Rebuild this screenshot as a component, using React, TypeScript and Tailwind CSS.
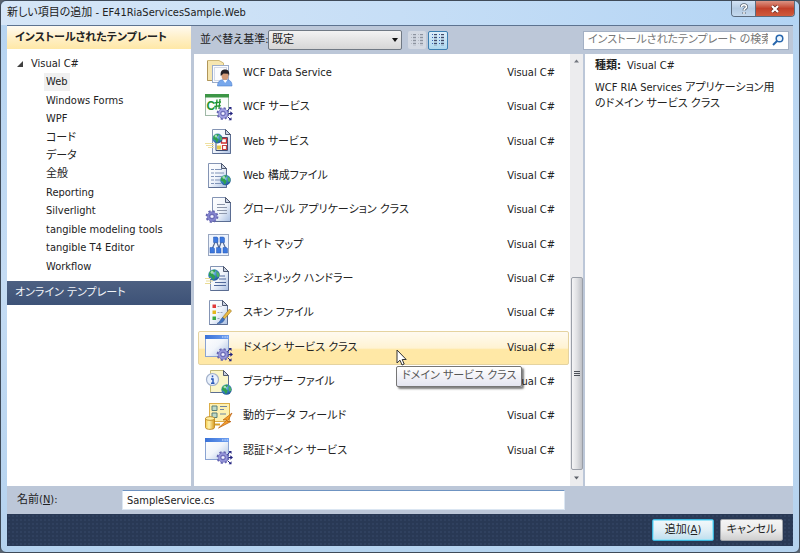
import { useState } from 'react'
import type { ReactNode } from 'react'

const categories = [
  'Web',
  'Windows Forms',
  'WPF',
  'コード',
  'データ',
  '全般',
  'Reporting',
  'Silverlight',
  'tangible modeling tools',
  'tangible T4 Editor',
  'Workflow',
]

function Icon({ children }: { children: ReactNode }) {
  return (
    <svg viewBox="0 0 28 28" className="w-7 h-7 shrink-0" aria-hidden="true">
      <defs>
        <linearGradient id="page" x1="0" y1="0" x2="1" y2="1">
          <stop offset="0" stopColor="#ffffff" />
          <stop offset="0.5" stopColor="#f1f5fb" />
          <stop offset="1" stopColor="#a9bfe2" />
        </linearGradient>
        <linearGradient id="bar" x1="0" y1="0" x2="1" y2="0">
          <stop offset="0" stopColor="#3a72d8" />
          <stop offset="1" stopColor="#6fa0f0" />
        </linearGradient>
        <linearGradient id="gold" x1="0" y1="0" x2="1" y2="0">
          <stop offset="0" stopColor="#f5cc4c" />
          <stop offset="0.4" stopColor="#fff3b0" />
          <stop offset="1" stopColor="#d99a1c" />
        </linearGradient>
        <radialGradient id="earth" cx="0.35" cy="0.3" r="0.8">
          <stop offset="0" stopColor="#a8dcf4" />
          <stop offset="0.5" stopColor="#3b83c4" />
          <stop offset="1" stopColor="#1b4c8c" />
        </radialGradient>
      </defs>
      {children}
    </svg>
  )
}

function Page({ x, y, w, h, fill = 'url(#page)', stroke = '#8494b4' }: { x: number; y: number; w: number; h: number; fill?: string; stroke?: string }) {
  const r = x + w
  return (
    <>
      <path d={`M${x} ${y}H${r - 5}L${r} ${y + 5}V${y + h}H${x}Z`} fill={fill} stroke={stroke} />
      <path d={`M${r} ${y + 5}V${y + h}H${x}`} fill="none" stroke="#5b6d92" />
      <path d={`M${r - 5} ${y}V${y + 5}H${r}Z`} fill="#c9d2e2" stroke="#3f4a62" strokeWidth="0.9" />
    </>
  )
}

function Globe({ x, y, r }: { x: number; y: number; r: number }) {
  return (
    <g transform={`translate(${x} ${y}) scale(${r / 5})`}>
      <circle r="5" fill="url(#earth)" />
      <path d="M-4.2-2C-3-4.2 0-4.8 1.5-4.4L.6-2.6-1-1.6-.2 0 1.200.8.2 3.4-.8 4.4-2.2 1.6-4.4.8Z" fill="#2fa04e" />
      <path d="M2.2-3.6L4.2-1.6 4.6 1 3 2.2 2-.4Z" fill="#4cb563" />
      <circle cx="-1.6" cy="-2.4" r="1.3" fill="#d9f6dd" opacity="0.7" />
    </g>
  )
}

function Gear({ x, y, fill = '#9696da' }: { x: number; y: number; fill?: string }) {
  return (
    <g transform={`translate(${x} ${y})`}>
      <circle r="5.3" fill="none" stroke="#6464b0" strokeWidth="2.2" strokeDasharray="2.1 2.06" />
      <circle r="4.8" fill={fill} stroke="#6c6cb8" strokeWidth="0.6" />
      <circle r="2.3" fill="#c4c4ee" stroke="#4f4fa0" strokeWidth="0.8" />
      <circle r="0.9" fill="#fff" />
    </g>
  )
}

function Arrows() {
  return (
    <g stroke="#22227e" fill="none">
      <path d="M22.500 17.500L25 15.200M23.500 20.500H26M22.500 23.500L25 26" />
      <path d="M23.500 14H26.500V17ZM25.300 18.200L28 20.500 25.300 22.800ZM26.500 24.200V27.200H23.500Z" fill="#22227e" stroke="none" />
    </g>
  )
}

function WindowIcon() {
  return (
    <Icon>
      <rect x="0.500" y="1.500" width="23" height="21" fill="url(#page)" stroke="#8aa3d2" />
      <rect x="0" y="1" width="24" height="4" fill="url(#bar)" />
      <path d="M17 3h1.400M19.400 3h1.400M21.600 3H23" stroke="#dbe8ff" />
      <Gear x={18} y={20.5} />
      <Arrows />
    </Icon>
  )
}

const templates = [
  {
    name: 'WCF Data Service',
    icon: (
      <Icon>
        <path d="M2.500 1.500H14L18.500 4V21.500H2.500Z" fill="#f6e6b0" stroke="#cdb778" />
        <path d="M2.500 2V21.500H8" fill="none" stroke="#b0965a" />
        <rect x="7.500" y="6.500" width="16" height="17" fill="#fbfcff" stroke="#9aaccb" />
        <rect x="9.500" y="8.500" width="12" height="13" fill="none" stroke="#a8b6d0" strokeDasharray="1 1" />
        <path d="M12.500 27C12.500 22.500 15 20.500 20 20.500S27 22.500 27 27Z" fill="#78a8ec" stroke="#4f7fce" strokeWidth="0.600" />
        <path d="M18 21L20.200 24 22.400 21Z" fill="#fff" />
        <ellipse cx="20" cy="16.500" rx="3.500" ry="4.500" fill="#d29a78" />
        <path d="M15.800 17C15 12.500 17 10.500 20 10.500S25 12.500 24 17L23.200 14.800 18.500 14.500Z" fill="#262126" />
      </Icon>
    ),
  },
  {
    name: 'WCF サービス',
    icon: (
      <Icon>
        <rect x="0.500" y="1.500" width="23" height="21" fill="#fbfdfb" stroke="#9fb8a6" />
        <rect x="0" y="1" width="24" height="3.500" fill="#3c9646" />
        <text x="1.500" y="17" fontSize="12" fontWeight="bold" fill="#219531" fontFamily="Liberation Sans, sans-serif">C</text>
        <path d="M12 6.500L11 16.500M15 6L14 16M9.500 9.800L16 9M9.300 13.500L15.800 12.700" stroke="#219531" strokeWidth="1.300" />
        <Gear x={18} y={20.5} fill="#a5a5e4" />
        <Arrows />
      </Icon>
    ),
  },
  {
    name: 'Web サービス',
    icon: (
      <Icon>
        <Page x={7.5} y={1.5} w={18} h={24} />
        <path d="M11 9.500H22.500V22.500H11Z" fill="#fff" stroke="#3c4d74" />
        <path d="M16.500 10.500h5v4.500h-5z" fill="#fff" stroke="#cf3232" strokeWidth="1.300" />
        <path d="M12 17.500h4v4h-4z" fill="#e5c84b" />
        <path d="M17.500 17.500h4v4h-4z" fill="#fff" stroke="#c94242" strokeWidth="1.200" />
        <Globe x={12.5} y={10.5} r={5} />
        <path d="M0 15.500H9M1 17.500H9M3 19.500H9" stroke="#efe0a0" />
      </Icon>
    ),
  },
  {
    name: 'Web 構成ファイル',
    icon: (
      <Icon>
        <Page x={3.5} y={1.5} w={18} h={24} />
        <path d="M6 7.500h3M10 7.500h7M6 11h3M10 11h9M6 14.500h3M10 14.500h7M6 18h3M10 18h6M6 21.500h3M10 21.500h6" stroke="#8094b8" strokeWidth="1.200" />
        <Globe x={20.5} y={18} r={5.3} />
      </Icon>
    ),
  },
  {
    name: 'グローバル アプリケーション クラス',
    icon: (
      <Icon>
        <Page x={7.5} y={1.5} w={18} h={24} />
        <path d="M12 8.500h8M12 11.500h10M12 14.500h10M14 17.500h8" stroke="#8d97ab" />
        <Gear x={7} y={20.5} fill="#8484cf" />
      </Icon>
    ),
  },
  {
    name: 'サイト マップ',
    icon: (
      <Icon>
        <rect x="3.500" y="3.500" width="20" height="21" fill="#eef4fd" stroke="#98a6c0" />
        <path d="M11 9L7.500 17M11 9L14 17M17 9L14 17M17 9L20.500 17" stroke="#54688f" fill="none" strokeWidth="1.200" />
        <path d="M8.500 6h3.500l1 1v4.500H8.500zM15 6h3.500l1 1v4.500H15zM5 16.500h3.500l1 1v4.500H5zM11.500 16.500h3.500l1 1v4.500h-4.500zM18 16.500h3.500l1 1v4.500H18z" fill="#3c78de" stroke="#2556b0" strokeWidth="0.500" />
      </Icon>
    ),
  },
  {
    name: 'ジェネリック ハンドラー',
    icon: (
      <Icon>
        <Page x={5.5} y={1.5} w={18} h={24} />
        <path d="M15 11h5M14 14h7M10 17.500h11M9 20.500h12" stroke="#50699b" strokeWidth="1.200" />
        <Globe x={9} y={10} r={5.8} />
        <path d="M0 13.500H6M1 16H8M0 18.500H6" stroke="#eadc96" />
      </Icon>
    ),
  },
  {
    name: 'スキン ファイル',
    icon: (
      <Icon>
        <Page x={4.5} y={1.5} w={18} h={24} />
        <path d="M7.500 5.500h3.500v3.500H7.500z" fill="#e03a3a" />
        <path d="M7.500 11.500h3.500v3.500H7.500z" fill="#e5b71d" />
        <path d="M7.500 17.500h3.500v3.500H7.500z" fill="#3aa845" />
        <path d="M12.500 7.500h4M12.500 13.500h6M12.500 19.500h3" stroke="#98a3b8" strokeDasharray="2 1" />
        <path d="M24.500 10L26.500 12 19.500 20 17.500 18.500Z" fill="#e9bb45" stroke="#98701c" strokeWidth="0.600" />
        <path d="M17.500 18.500L19.500 20C19 23 16 25 12 24.500 15 23.500 15.500 20 17.500 18.500Z" fill="#3f72c0" stroke="#274b88" strokeWidth="0.500" />
      </Icon>
    ),
  },
  { name: 'ドメイン サービス クラス', icon: <WindowIcon /> },
  {
    name: 'ブラウザー ファイル',
    icon: (
      <Icon>
        <Page x={5.5} y={2.5} w={18} h={22} fill="#fbf6c8" stroke="#c0b878" />
        <circle cx="7.500" cy="11.500" r="6" fill="#e9f1fc" stroke="#a3b1cb" strokeWidth="1.200" />
        <path d="M7.500 7.500V9.300M6 11H8V15M6 15.200H9.500" stroke="#2a59b8" strokeWidth="1.500" fill="none" />
        <Globe x={21.5} y={21.5} r={5.2} />
      </Icon>
    ),
  },
  {
    name: '動的データ フィールド',
    icon: (
      <Icon>
        <rect x="4.500" y="1.500" width="20" height="18" fill="#fdf0b0" stroke="#dcae48" />
        <path d="M7 4h5v4.500H7zM7 11h5v4.500H7z" fill="#bcd8c6" stroke="#587f7a" />
        <path d="M15 4.500h7M15 7.500h4M15 12h6" stroke="#6f83a0" strokeWidth="1.200" />
        <path d="M0.500 16.500V25.500C0.500 28 9.500 28 9.500 25.500V16.500Z" fill="url(#gold)" stroke="#b67d17" strokeWidth="0.800" />
        <ellipse cx="5" cy="16.500" rx="4.500" ry="1.900" fill="#fff0a0" stroke="#b67d17" strokeWidth="0.800" />
        <path d="M27 11L18 18H22L13.500 26 26 19.500H22.500Z" fill="#f5a02c" stroke="#b85d10" strokeWidth="0.700" />
        <path d="M10 22.500H15" stroke="#d8a028" strokeWidth="2" />
      </Icon>
    ),
  },
  { name: '認証ドメイン サービス', icon: <WindowIcon /> },
]

function ViewIcon({ color, marker }: { color: string; marker: string }) {
  return (
    <svg viewBox="0 0 14 14" className="w-3.5 h-3.5" aria-hidden="true">
      <path d="M1 1.500h1M1 4.500h1M1 7.500h1M1 10.500h1M8 1.500h1M8 4.500h1M8 7.500h1M8 10.500h1" stroke={marker} />
      <path d="M3 1.500h3M3 4.500h3M3 7.500h3M3 10.500h3M10 1.500h3M10 4.500h3M10 7.500h3M10 10.500h3" stroke={color} />
      <path d="M3 3h3M3 6h3M3 9h3M3 12h3M10 3h3M10 6h3M10 9h3M10 12h3" stroke={color} opacity="0.4" />
    </svg>
  )
}

function TitleBar() {
  return (
    <header className="flex items-start justify-between h-6 pl-1.5 pr-1">
      <h1 className="pt-1 leading-4">新しい項目の追加 - EF41RiaServicesSample.Web</h1>
      <div className="flex h-4 rounded-b border border-t-0 border-[#5b6b7e] overflow-hidden">
        <button aria-label="ヘルプ" className="w-6 flex items-center justify-center bg-linear-to-b from-[#d3e3f5] via-[#b4cbe3] to-[#c5d9ee] border-r border-[#5b6b7e]">
          <svg viewBox="0 0 10 12" className="w-2.5 h-3" aria-hidden="true">
            <path d="M2.500 4C2.500 1 7.500 1 7.500 4C7.500 5.500 5 5.500 5 7.500M5 9V11" fill="none" stroke="#5b6674" strokeWidth="3" />
            <path d="M2.500 4C2.500 1 7.500 1 7.500 4C7.500 5.500 5 5.500 5 7.500M5 9V11" fill="none" stroke="#fff" strokeWidth="1.500" />
          </svg>
        </button>
        <button aria-label="閉じる" className="w-[38px] flex items-center justify-center bg-linear-to-b from-[#dc9384] via-[#c2402a] to-[#cf5a3c]">
          <svg viewBox="0 0 12 10" className="w-3 h-2.5" aria-hidden="true">
            <path d="M3 2L9 8M9 2L3 8" stroke="#6a2a24" strokeWidth="3.600" />
            <path d="M3 2L9 8M9 2L3 8" stroke="#fff" strokeWidth="2.200" />
          </svg>
        </button>
      </div>
    </header>
  )
}

function Scrollbar() {
  return (
    <div className="w-[13px] flex flex-col items-center bg-[#ececee] shrink-0" aria-hidden="true">
      <svg viewBox="0 0 13 16" className="w-[13px] h-4 shrink-0">
        <path d="M4 8.500L6.500 5.500 9 8.500Z" fill="#73777f" />
      </svg>
      <div className="flex-[209]" />
      <div className="flex-[193] w-3 flex flex-col items-center justify-center gap-px rounded-xs border border-[#9a9fa8] bg-linear-to-r from-[#f5f5f6] via-[#dfe0e3] to-[#bfc1c6]">
        <span className="w-1.5 h-px bg-[#4c5058]" />
        <span className="w-1.5 h-px bg-[#4c5058]" />
        <span className="w-1.5 h-px bg-[#4c5058]" />
      </div>
      <svg viewBox="0 0 13 16" className="w-[13px] h-4 shrink-0">
        <path d="M4 6.500L6.500 9.500 9 6.500Z" fill="#5c6068" />
      </svg>
    </div>
  )
}

export default function App() {
  const [category, setCategory] = useState('Web')
  const [selected, setSelected] = useState('ドメイン サービス クラス')
  const [name, setName] = useState('SampleService.cs')

  return (
    <div className="bg-[#59636f]">
      <div className="min-h-screen flex flex-col rounded-md border border-[#3f4a58] bg-linear-to-b from-[#b5d3f0] via-[#c5dcf4] to-[#b4d2ee] px-1.5 pb-1.5 text-[11px] leading-4 text-[#222] font-['DejaVu_Sans_Condensed','Noto_Sans_CJK_JP',sans-serif] [font-feature-settings:'palt']">
        <div className="-mx-1.5 rounded-t-md bg-linear-to-r from-[#d6e6f7] via-[#c6def6] to-[#b3d4f4]">
          <TitleBar />
        </div>

        <div className="flex-1 flex flex-col bg-[#bcc7d8] border-t border-[#5d7390]">
          <div className="flex-1 flex">
            <aside className="w-[184px] bg-white shrink-0">
              <h2 className="h-[23px] px-2 flex items-center font-bold bg-linear-to-b from-[#fffaf0] via-[#fff0c8] to-[#ffe8a6]">
                インストールされたテンプレート
              </h2>
              <div className="pt-1.5 pb-[5px]">
                <div className="flex items-center gap-2 pl-2.5 h-[18px]">
                  <svg viewBox="0 0 6 6" className="w-1.5 h-1.5" aria-hidden="true">
                    <path d="M6 0V6H0Z" fill="#404040" />
                  </svg>
                  Visual C#
                </div>
                <ul className="h-[203px] flex flex-col pl-[37px]">
                  {categories.map(c => (
                    <li key={c} className="flex-1 flex items-center">
                      <button
                        onClick={() => setCategory(c)}
                        className={c === category ? 'px-0.5 h-full bg-[#f0f0f0]' : 'px-0.5 h-full'}
                      >
                        {c}
                      </button>
                    </li>
                  ))}
                </ul>
              </div>
              <h2 className="h-6 px-2 flex items-center text-[#f0f3f8] bg-linear-to-b from-[#4d6082] to-[#3d5277]">
                オンライン テンプレート
              </h2>
            </aside>

            <div className="flex-1 flex flex-col pl-[3px]">
              <div className="h-7 flex items-center pl-1.5 pr-1">
                <label htmlFor="sort" className="w-[68px] whitespace-nowrap">並べ替え基準:</label>
                <div className="relative">
                  <select id="sort" className="appearance-none w-[134px] h-5 pl-[3px] rounded-xs border border-[#707984] bg-linear-to-b from-[#f3f3f3] to-[#d6d6d6]">
                    <option>既定</option>
                  </select>
                  <svg viewBox="0 0 6 4" className="absolute right-1 top-2 w-1.5 h-1 pointer-events-none" aria-hidden="true">
                    <path d="M0 0H6L3 4Z" fill="#111" />
                  </svg>
                </div>
                <button aria-label="小さいアイコン" className="ml-1.5 w-[18px] h-[18px] flex items-center justify-center rounded-xs bg-[#d3d9e3]">
                  <ViewIcon color="#8c939f" marker="#b3b8c2" />
                </button>
                <button aria-label="中アイコン" className="ml-0.5 w-5 h-[19px] flex items-center justify-center rounded-xs border border-[#3c7fb1] bg-linear-to-b from-[#dceefa] to-[#aed8ef]">
                  <ViewIcon color="#3f4a68" marker="#3a62b8" />
                </button>
                <div className="ml-auto w-[206px] h-[19px] flex items-center gap-1 px-1 bg-white border border-[#a3b0c4]">
                  <input
                    aria-label="検索"
                    placeholder="インストールされたテンプレート の検索"
                    className="flex-1 min-w-0 outline-none placeholder:text-[#777]"
                  />
                  <svg viewBox="0 0 12 12" className="w-3 h-3 shrink-0" aria-hidden="true">
                    <path d="M5 7L1 11" stroke="#2766ad" strokeWidth="2" />
                    <circle cx="7.500" cy="4.500" r="3.300" fill="#eaf5ff" stroke="#2766ad" strokeWidth="1.500" />
                  </svg>
                </div>
              </div>

              <div className="flex-1 flex">
                <div className="flex-1 flex bg-white">
                  <ul className="flex-1 h-[412px] mt-0.5 flex flex-col pl-1 pr-px">
                    {templates.map(t => (
                      <li key={t.name} className="relative flex-1 flex">
                        <button
                          onClick={() => setSelected(t.name)}
                          className={
                            t.name === selected
                              ? 'flex-1 flex items-center pl-1.5 pr-[13px] rounded-xs border border-[#e5d3a0] bg-linear-to-b from-[#fffaf0] from-0% via-[#fff3d2] via-50% to-[#ffe8a6] to-55%'
                              : 'flex-1 flex items-center pl-1.5 pr-[13px] border border-transparent'
                          }
                        >
                          {t.icon}
                          <span className="ml-2.5 flex-1 text-left">{t.name}</span>
                          <span>Visual C#</span>
                        </button>
                        {t.name === selected && (
                          <>
                            <svg viewBox="0 0 12 18" className="absolute left-[198px] top-[18px] w-3 h-[18px]" aria-hidden="true">
                              <path d="M1 1V14L4 11.200 6 16 8.200 15 6.200 10.500H10.200Z" fill="#fff" stroke="#333" />
                            </svg>
                            <div role="tooltip" className="absolute z-10 left-[198px] top-[35px] h-[21px] px-[5px] whitespace-nowrap rounded-xs border border-[#767676] bg-linear-to-b from-white to-[#e4e5f0] text-[#575757] leading-[18px] shadow-[2px_2px_2px_rgba(0,0,0,0.5)]">
                              {t.name}
                            </div>
                          </>
                        )}
                      </li>
                    ))}
                  </ul>
                  <Scrollbar />
                </div>

                <section className="w-[208px] ml-0.5 bg-white px-2.5 pt-1">
                  <p>
                    <strong className="mr-1.5">種類:</strong>Visual C#
                  </p>
                  <p className="mt-1.5">WCF RIA Services アプリケーション用のドメイン サービス クラス</p>
                </section>
              </div>
            </div>
          </div>

          <div className="h-7 flex items-center pl-2.5">
            <label htmlFor="name" className="w-[105px]">
              名前(<u>N</u>):
            </label>
            <input
              id="name"
              value={name}
              onChange={e => setName(e.target.value)}
              className="flex-1 mr-[228px] h-5 px-1 bg-white border border-[#dbe6f2] border-t-[#6f94c2] outline-none"
            />
          </div>

          <footer className="h-8 flex items-center justify-end gap-1.5 px-2.5 bg-[#293955] bg-[radial-gradient(#30415f_1px,transparent_1px)] bg-size-[4px_4px]">
            <button className="w-[62px] h-[22px] rounded-xs border border-[#3cb4dc] ring-1 ring-inset ring-[#9ce4f8] bg-linear-to-b from-[#f2f8fb] via-[#e0eff6] to-[#bfdfee]">
              追加(<u>A</u>)
            </button>
            <button className="w-[63px] h-[22px] whitespace-nowrap rounded-xs border border-[#a0a4aa] bg-linear-to-b from-[#f4f4f4] via-[#ebebeb] to-[#cfcfcf]">
              キャンセル
            </button>
          </footer>
        </div>
      </div>
    </div>
  )
}
